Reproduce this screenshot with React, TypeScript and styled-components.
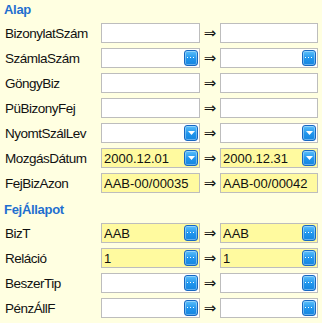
import * as React from "react";
import styled, { createGlobalStyle } from "styled-components";

const GlobalStyle = createGlobalStyle`
  html, body {
    margin: 0;
    padding: 0;
    background: #ffffe1;
  }
  body {
    font-family: "Liberation Sans", Arial, sans-serif;
  }
`;

const Page = styled.div`
  width: 322px;
  height: 323px;
  background: #ffffe1;
  padding: 0 0 0 4px;
  box-sizing: border-box;
  display: flex;
  flex-direction: column;
`;

const Section = styled.div<{ $first?: boolean }>`
  display: flex;
  flex-direction: column;
  gap: 5px;
  margin-top: ${({ $first }) => ($first ? "0" : "7px")};
`;

const SectionTitle = styled.div`
  height: 18px;
  line-height: 20px;
  font-size: 13px;
  font-weight: bold;
  letter-spacing: -0.3px;
  color: #1f6fd0;
`;

const Row = styled.div`
  display: grid;
  grid-template-columns: 97px 99px 20px 98px;
  height: 20px;
  align-items: center;
`;

const Label = styled.div`
  font-size: 13.5px;
  letter-spacing: -0.5px;
  color: #111;
  padding-left: 1px;
  white-space: nowrap;
`;

const Field = styled.div<{ $filled?: boolean }>`
  height: 20px;
  box-sizing: border-box;
  border: 1px solid #bdbdbd;
  background: ${({ $filled }) => ($filled ? "#fffa9f" : "#ffffff")};
  display: flex;
  align-items: center;
  padding: 0 1px 0 2px;
  font-size: 13px;
  color: #111;
`;

const Value = styled.span`
  flex: 1;
  white-space: nowrap;
  overflow: hidden;
`;

const Arrow = styled.div`
  text-align: center;
  font-size: 15px;
  font-family: "DejaVu Sans", sans-serif;
  color: #111;
  line-height: 18px;
`;

const PickButton = styled.div`
  width: 14px;
  height: 16px;
  box-sizing: border-box;
  border: 1px solid #1668c2;
  border-radius: 3px;
  background: linear-gradient(#5cc0fb, #1e94ec 55%, #1686e0);
  box-shadow: inset 0 0 0 1px rgba(255, 255, 255, 0.35);
  display: flex;
  align-items: center;
  justify-content: center;
  color: #fff;
`;

type Kind = "none" | "dots" | "drop";

function Button({ kind }: { kind: Kind }) {
  if (kind === "none") return null;
  return (
    <PickButton>
      {kind === "dots" ? (
        <svg width="8" height="2" viewBox="0 0 8 2">
          <rect x="0" y="0" width="1" height="1" fill="#fff" />
          <rect x="3" y="0" width="1" height="1" fill="#fff" />
          <rect x="6" y="0" width="1" height="1" fill="#fff" />
        </svg>
      ) : (
        <svg width="7" height="4" viewBox="0 0 7 4">
          <path d="M0 0 H7 L3.5 4 Z" fill="#fff" />
        </svg>
      )}
    </PickButton>
  );
}

interface RowData {
  label: string;
  kind: Kind;
  filled?: boolean;
  from?: string;
  to?: string;
}

const alap: RowData[] = [
  { label: "BizonylatSzám", kind: "none" },
  { label: "SzámlaSzám", kind: "dots" },
  { label: "GöngyBiz", kind: "none" },
  { label: "PüBizonyFej", kind: "none" },
  { label: "NyomtSzálLev", kind: "drop" },
  { label: "MozgásDátum", kind: "drop", filled: true, from: "2000.12.01", to: "2000.12.31" },
  { label: "FejBizAzon", kind: "none", filled: true, from: "AAB-00/00035", to: "AAB-00/00042" },
];

const fejAllapot: RowData[] = [
  { label: "BizT", kind: "dots", filled: true, from: "AAB", to: "AAB" },
  { label: "Reláció", kind: "dots", filled: true, from: "1", to: "1" },
  { label: "BeszerTip", kind: "dots" },
  { label: "PénzÁllF", kind: "dots" },
];

function RangeRow({ row }: { row: RowData }) {
  return (
    <Row>
      <Label>{row.label}</Label>
      <Field $filled={row.filled}>
        <Value>{row.from}</Value>
        <Button kind={row.kind} />
      </Field>
      <Arrow>⇒</Arrow>
      <Field $filled={row.filled}>
        <Value>{row.to}</Value>
        <Button kind={row.kind} />
      </Field>
    </Row>
  );
}

export default function App() {
  return (
    <>
      <GlobalStyle />
      <Page>
        <Section $first>
          <SectionTitle>Alap</SectionTitle>
          {alap.map((r) => (
            <RangeRow key={r.label} row={r} />
          ))}
        </Section>
        <Section>
          <SectionTitle>FejÁllapot</SectionTitle>
          {fejAllapot.map((r) => (
            <RangeRow key={r.label} row={r} />
          ))}
        </Section>
      </Page>
    </>
  );
}
